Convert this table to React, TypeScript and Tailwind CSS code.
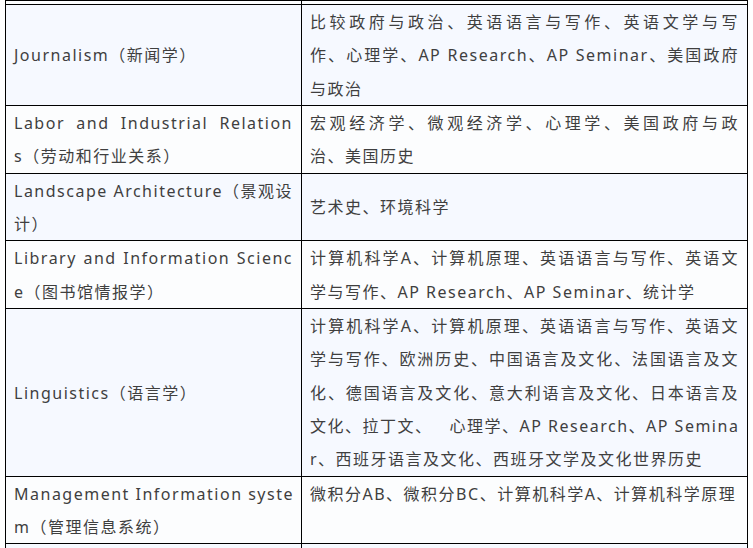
type Line = [string, boolean];

type Row = {
  left: Line[];
  right: Line[];
  blue: boolean;
  rightTop?: boolean;
};

const rows: Row[] = [
  {
    left: [["Journalism（新闻学）", false]],
    right: [
      ["比较政府与政治、英语语言与写作、英语文学与写", true],
      ["作、心理学、AP Research、AP Seminar、美国政府", true],
      ["与政治", false],
    ],
    blue: true,
  },
  {
    left: [
      ["Labor and Industrial Relation", true],
      ["s（劳动和行业关系）", false],
    ],
    right: [
      ["宏观经济学、微观经济学、心理学、美国政府与政", true],
      ["治、美国历史", false],
    ],
    blue: false,
  },
  {
    left: [
      ["Landscape Architecture（景观设", true],
      ["计）", false],
    ],
    right: [["艺术史、环境科学", false]],
    blue: true,
  },
  {
    left: [
      ["Library and Information Scienc", true],
      ["e（图书馆情报学）", false],
    ],
    right: [
      ["计算机科学A、计算机原理、英语语言与写作、英语文", true],
      ["学与写作、AP Research、AP Seminar、统计学", false],
    ],
    blue: false,
  },
  {
    left: [["Linguistics（语言学）", false]],
    right: [
      ["计算机科学A、计算机原理、英语语言与写作、英语文", true],
      ["学与写作、欧洲历史、中国语言及文化、法国语言及文", true],
      ["化、德国语言及文化、意大利语言及文化、日本语言及", true],
      ["文化、拉丁文、\u00a0\u00a0 心理学、AP Research、AP Semina", true],
      ["r、西班牙语言及文化、西班牙文学及文化世界历史", false],
    ],
    blue: true,
  },
  {
    left: [
      ["Management Information syste", true],
      ["m（管理信息系统）", false],
    ],
    right: [["微积分AB、微积分BC、计算机科学A、计算机科学原理", false]],
    blue: false,
    rightTop: true,
  },
];

// each line is its own block so the breaks match the original article
const Lines = ({ lines }: { lines: Line[] }) => (
  <>
    {lines.map(([text, justify], i) => (
      <div
        key={i}
        className={
          "whitespace-pre pt-[2px] leading-[31.33px] [text-spacing-trim:space-all] " +
          (justify ? "text-justify [text-align-last:justify]" : "")
        }
      >
        {text}
      </div>
    ))}
  </>
);

export default function App() {
  return (
    <div className="h-[548px] overflow-hidden bg-white">
      <table
        className="ml-[5px] w-[743px] table-fixed border-collapse text-[16px] leading-[33.33px] tracking-[1.5px] text-[#3f3f3f]"
        style={{ fontFamily: '"Noto Sans", "Noto Sans CJK SC", sans-serif' }}
      >
        <tbody>
          <tr className="bg-[#fcfdfe]">
            <td className="h-[4px] w-[296px] border border-black p-0 leading-none"></td>
            <td className="h-[4px] border border-black p-0 leading-none"></td>
          </tr>
          {rows.map((row, i) => (
            <tr key={i} className={row.blue ? "bg-[#f6f9ff]" : "bg-[#fcfdfe]"}>
              <td className="border border-black px-2 py-0 align-middle">
                <Lines lines={row.left} />
              </td>
              <td
                className={
                  "border border-black px-2 py-0 " +
                  (row.rightTop ? "align-top" : "align-middle")
                }
              >
                <Lines lines={row.right} />
              </td>
            </tr>
          ))}
          <tr className="bg-[#f6f9ff]">
            <td className="border border-black px-2 py-0">&nbsp;</td>
            <td className="border border-black px-2 py-0">&nbsp;</td>
          </tr>
        </tbody>
      </table>
    </div>
  );
}
